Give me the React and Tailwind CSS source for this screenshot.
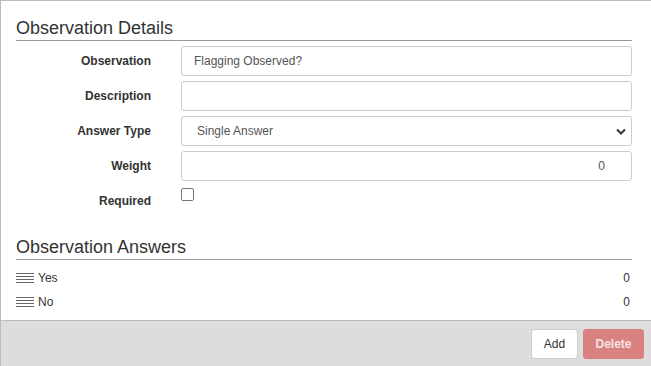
import { useState } from 'react';

const Field = ({ label, children }) => (
  <div className="flex items-center h-[30px]">
    <label className="w-[135px] shrink-0 text-right text-[12px] font-bold text-[#333]">{label}</label>
    <div className="ml-[30px] flex-1">{children}</div>
  </div>
);

const Handle = () => (
  <svg width="18" height="10" viewBox="0 0 18 10" className="shrink-0">
    {[0.5, 3.5, 6.5, 9.5].map((y) => (
      <line key={y} x1="0" x2="18" y1={y} y2={y} stroke="#666" strokeWidth="1" />
    ))}
  </svg>
);

export default function App() {
  const [answers] = useState([
    { name: 'Yes', value: 0 },
    { name: 'No', value: 0 },
  ]);

  const inputCls =
    'w-full h-[30px] rounded-[3px] border border-[#ccc] bg-white px-[12px] text-[12px] text-[#555] outline-none';

  return (
    <div
      className="w-[651px] h-[366px] flex flex-col border-l border-t border-[#bbb] bg-white overflow-hidden"
      style={{ fontFamily: '"Liberation Sans", Arial, sans-serif' }}
    >
      <div className="flex-1 pl-[15px] pr-[19px]">
        <h3 className="mt-[16px] text-[18px] leading-[22px] text-[#333] border-b border-[#999] pb-[1px]">
          Observation Details
        </h3>
        <div className="mt-[5px] flex flex-col gap-[5px]">
          <Field label="Observation">
            <input className={inputCls} defaultValue="Flagging Observed?" />
          </Field>
          <Field label="Description">
            <input className={inputCls} defaultValue="" />
          </Field>
          <Field label="Answer Type">
            <div className="relative">
              <select className={inputCls + ' appearance-none pl-[15px]'} defaultValue="single">
                <option value="single">Single Answer</option>
              </select>
              <svg
                width="10"
                height="7"
                viewBox="0 0 10 7"
                className="absolute right-[6px] top-[12px] pointer-events-none"
              >
                <path d="M1 1.5 L5 5.5 L9 1.5" fill="none" stroke="#333" strokeWidth="2" />
              </svg>
            </div>
          </Field>
          <Field label="Weight">
            <input className={inputCls + ' text-right pr-[26px]'} defaultValue="0" />
          </Field>
          <div className="flex items-center h-[30px]">
            <label className="w-[135px] shrink-0 text-right text-[12px] font-bold text-[#333]">Required</label>
            <div className="ml-[30px] flex-1 flex items-start h-full pt-[2px]">
              <span className="block w-[13px] h-[13px] rounded-[2px] border border-[#767676] bg-white" />
            </div>
          </div>
        </div>

        <h3 className="mt-[20px] text-[18px] leading-[22px] text-[#333] border-b border-[#999] pb-[1px]">
          Observation Answers
        </h3>
        <div className="mt-[6px] flex flex-col">
          {answers.map((a) => (
            <div key={a.name} className="flex items-center h-[24px] text-[12px] text-[#333]">
              <Handle />
              <span className="ml-[4px] flex-1">{a.name}</span>
              <span className="pr-[2px]">{a.value}</span>
            </div>
          ))}
        </div>
      </div>

      <div className="h-[46px] shrink-0 border-t border-[#bbb] bg-[#ddd] flex items-center justify-end gap-[5px] pr-[7px]">
        <button className="h-[30px] w-[47px] rounded-[3px] border border-[#ccc] bg-white text-[12px] text-[#333]">
          Add
        </button>
        <button
          disabled
          className="h-[30px] w-[61px] rounded-[3px] border border-[#d68380] bg-[#d9827f] text-[12px] font-bold text-[#f6e3e2]"
        >
          Delete
        </button>
      </div>
    </div>
  );
}
